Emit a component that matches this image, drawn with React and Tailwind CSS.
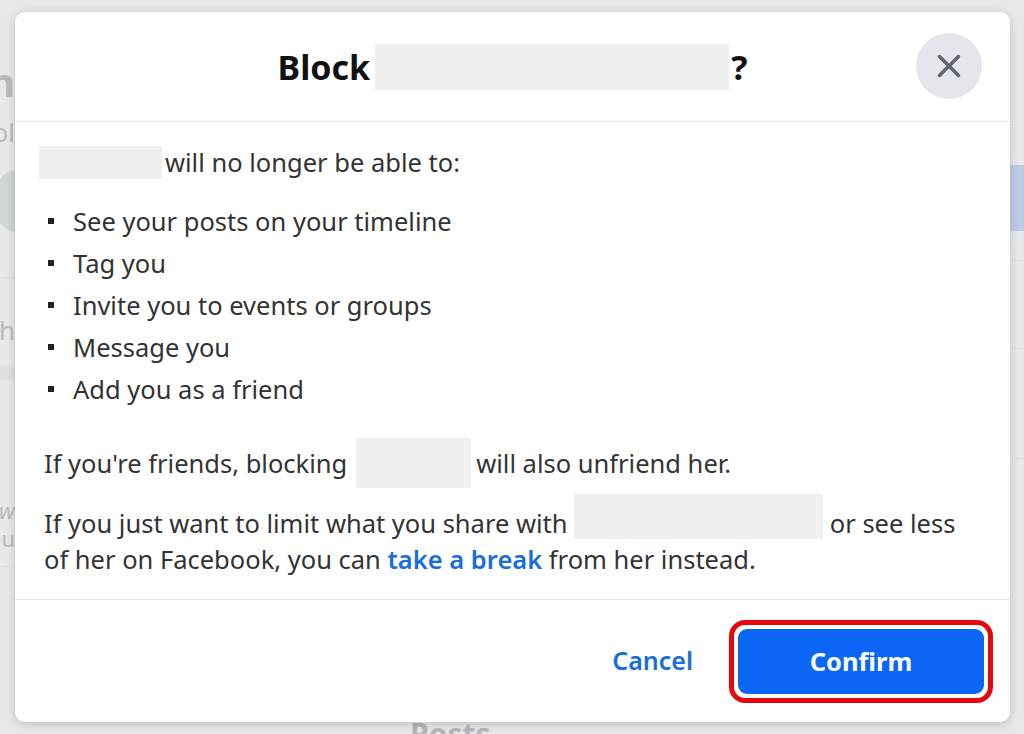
import { X } from 'lucide-react';

const items = [
  'See your posts on your timeline',
  'Tag you',
  'Invite you to events or groups',
  'Message you',
  'Add you as a friend',
];

// blurred-out name placeholder
const Redacted = ({ className }) => (
  <span className={`inline-block align-middle bg-[#f0f0f0] ${className}`} />
);

export default function App() {
  return (
    <div className="relative w-[1024px] h-[734px] overflow-hidden bg-[#e7e8ea] font-['Noto_Sans',sans-serif]">
      {/* faded page behind the dialog */}
      <div className="flex h-full">
        <div className="w-[15px] flex flex-col items-end overflow-hidden text-[#b9babc]">
          <div className="h-[58px]" />
          <div className="text-[40px] font-bold leading-[48px] whitespace-nowrap">n</div>
          <div className="text-[26px] leading-[40px] whitespace-nowrap mt-[6px]">ol</div>
          <div className="w-[40px] h-[62px] rounded-full bg-[#cfd6d8] mt-[18px] mr-[-22px]" />
          <div className="h-[46px] w-full border-b border-[#dcdddf]" />
          <div className="text-[26px] leading-[40px] whitespace-nowrap mt-[32px]">h</div>
          <div className="w-full h-[14px] bg-[#dfe0e2] mt-[16px]" />
          <div className="text-[22px] leading-[28px] whitespace-nowrap mt-[116px] italic">w</div>
          <div className="text-[22px] leading-[28px] whitespace-nowrap">ou</div>
          <div className="w-full border-b border-[#dcdddf] mt-[14px]" />
        </div>
        <div className="flex-1 flex flex-col justify-end items-start pl-[395px]">
          <div className="text-[30px] font-bold leading-[24px] text-[#b5b6b8] h-[12px] overflow-hidden">Posts</div>
        </div>
        <div className="w-[14px] flex flex-col">
          <div className="h-[165px]" />
          <div className="h-[66px] bg-[#bccbe6]" />
          <div className="h-[30px] border-b border-[#dcdddf]" />
          <div className="h-[88px] border-b border-[#dcdddf]" />
          <div className="h-[110px] border-b border-[#dcdddf]" />
        </div>
      </div>

      {/* dialog */}
      <div className="absolute left-[15px] top-[12px] w-[995px] h-[710px] bg-white rounded-[10px] shadow-[0_2px_10px_rgba(0,0,0,0.18)] flex flex-col text-[#333333]">
        <div className="relative h-[110px] flex items-center justify-center border-b border-[#e5e6e8] shrink-0">
          <h1 className="flex items-center text-[34px] font-bold text-[#111] leading-none">
            <span>Block</span>
            <Redacted className="w-[354px] h-[46px] ml-[5px] mr-[2px]" />
            <span>?</span>
          </h1>
          <button
            type="button"
            className="absolute right-[28px] top-[21px] w-[66px] h-[66px] rounded-full bg-[#e4e6eb] flex items-center justify-center text-[#606770]"
          >
            <X size={38} strokeWidth={2.2} />
          </button>
        </div>

        <div className="flex-1 pl-[29px] pr-[20px] pt-[22px] text-[25.5px]">
          <p className="flex items-center leading-[36px] -ml-[5px]">
            <Redacted className="w-[123px] h-[33px] mr-[3px]" />
            <span>will no longer be able to:</span>
          </p>
          <ul className="mt-[20px] pl-[4px]">
            {items.map((t) => (
              <li key={t} className="flex items-center h-[42px]">
                <span className="w-[6px] h-[6px] bg-[#222] mr-[19px]" />
                <span>{t}</span>
              </li>
            ))}
          </ul>
          <p className="mt-[28px] leading-[36px] flex items-center">
            <span>If you're friends, blocking</span>
            <Redacted className="w-[115px] h-[50px] ml-[9px] mr-[5px]" />
            <span>will also unfriend her.</span>
          </p>
          <p className="mt-[17px] leading-[36px]">
            If you just want to limit what you share with{' '}
            <Redacted className="w-[249px] h-[45px] -mt-[20px]" /> or see less
            <br />
            of her on Facebook, you can{' '}
            <a className="text-[#1a6ed8] font-semibold">take a break</a> from her instead.
          </p>
        </div>

        <div className="h-[123px] border-t border-[#e5e6e8] flex items-center justify-end pr-[17px] shrink-0">
          <button type="button" className="text-[25px] font-semibold text-[#1a6ed8] px-[8px] mr-[28px]">
            Cancel
          </button>
          <div className="rounded-[16px] border-[5px] border-[#e8060e] p-[4px]">
            <button
              type="button"
              className="w-[246px] h-[65px] rounded-[9px] bg-[#0b66f5] text-white text-[25.5px] font-bold"
            >
              Confirm
            </button>
          </div>
        </div>
      </div>
    </div>
  );
}
